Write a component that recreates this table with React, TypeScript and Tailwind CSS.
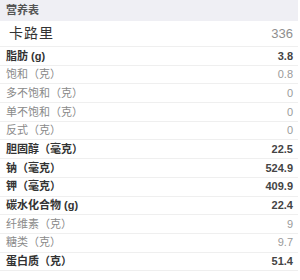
import React from "react";

interface Row {
  label: string;
  value: string;
  strong: boolean;
}

const rows: Row[] = [
  { label: "脂肪 (g)", value: "3.8", strong: true },
  { label: "饱和（克）", value: "0.8", strong: false },
  { label: "多不饱和（克）", value: "0", strong: false },
  { label: "单不饱和（克）", value: "0", strong: false },
  { label: "反式（克）", value: "0", strong: false },
  { label: "胆固醇（毫克）", value: "22.5", strong: true },
  { label: "钠（毫克）", value: "524.9", strong: true },
  { label: "钾（毫克）", value: "409.9", strong: true },
  { label: "碳水化合物 (g)", value: "22.4", strong: true },
  { label: "纤维素（克）", value: "9", strong: false },
  { label: "糖类（克）", value: "9.7", strong: false },
  { label: "蛋白质（克）", value: "51.4", strong: true },
];

export default function App() {
  return (
    <div
      className="w-[300px] h-[280px] bg-white overflow-hidden"
      style={{ fontFamily: '"Liberation Sans", "Noto Sans CJK SC", sans-serif' }}
    >
      <div className="w-[298px]">
        <div className="h-[21px] bg-[#efeff4] flex items-center pl-[6px] text-[11px] font-semibold text-[#555]">
          营养表
        </div>
        <div className="h-[26px] flex items-center justify-between pl-[9px] pr-[5px] border-b border-[#efefef]">
          <span className="text-[14px] text-[#333] tracking-[1px]">卡路里</span>
          <span className="text-[13px] text-[#8e8e8e]">336</span>
        </div>
        {rows.map((r) => (
          <div
            key={r.label}
            className="h-[18.7px] flex items-center justify-between pl-[6px] pr-[5px] border-b border-[#efefef] text-[11px]"
          >
            <span className={r.strong ? "font-semibold text-[#333]" : "text-[#8a8a8a]"}>{r.label}</span>
            <span className={r.strong ? "font-semibold text-[#444]" : "text-[#9a9a9a]"}>{r.value}</span>
          </div>
        ))}
      </div>
    </div>
  );
}
